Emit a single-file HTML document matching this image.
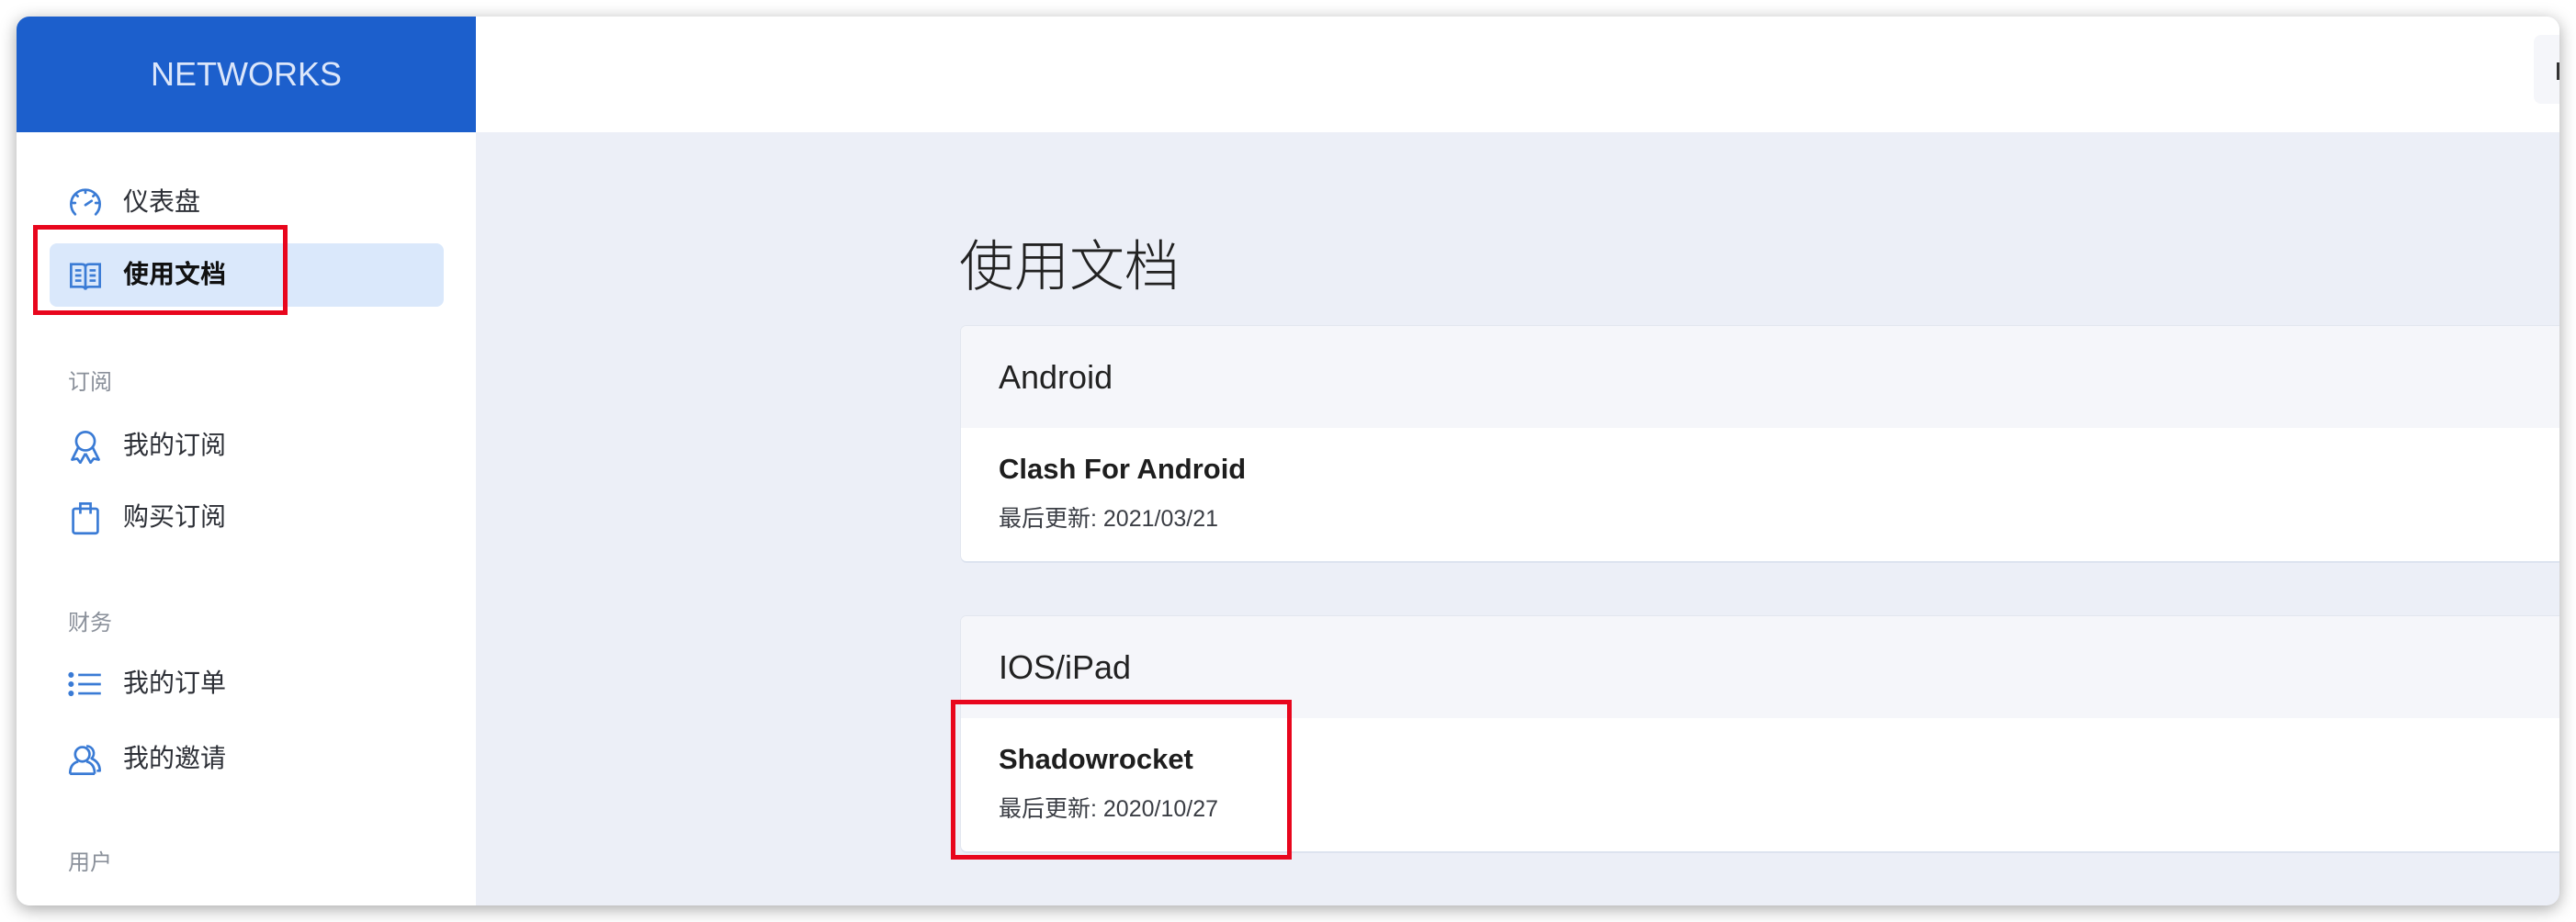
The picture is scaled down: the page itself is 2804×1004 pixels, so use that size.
<!DOCTYPE html>
<html><head><meta charset="utf-8"><style>
*{margin:0;padding:0;box-sizing:border-box}
body{width:2804px;height:1004px;background:#fff;position:relative;overflow:hidden;font-family:"Liberation Sans","Noto Sans CJK SC",sans-serif}
.win{position:absolute;left:18px;top:18px;width:2768px;height:968px;border-radius:14px;overflow:hidden;background:#eceff7;box-shadow:0 4px 18px rgba(0,0,0,.35)}
.logo{position:absolute;left:0;top:0;width:500px;height:126px;background:#1c5fcc;color:#dbe6fa;font-size:36px;text-align:center;line-height:126px}
.hdr{position:absolute;left:500px;top:0;right:0;height:126px;background:#fff}
.tr{position:absolute;right:0;top:20px;width:28px;height:75px;background:#f5f6fa;border-radius:8px 0 0 8px}
.tr:after{content:"";position:absolute;right:0;top:30px;width:3px;height:19px;background:#333}
.side{position:absolute;left:0;top:126px;width:500px;bottom:0;background:#fff}
.it{position:absolute;left:0;width:500px;height:40px;font-size:28px;color:#2c2f36;line-height:40px}
.it span{position:absolute;left:116px}
.it svg{position:absolute;left:56px;top:2px}
.lab{position:absolute;left:56px;font-size:24px;color:#8a909a}
.act{position:absolute;left:36px;top:121px;width:429px;height:69px;background:#dae8fb;border-radius:8px}
.main{position:absolute;left:500px;top:126px;right:0;bottom:0}
.title{position:absolute;left:526px;top:98px;font-size:60px;font-weight:300;color:#222;font-family:"Noto Sans CJK SC",sans-serif}
.card{position:absolute;left:528px;width:1800px;background:#fff;border-radius:6px;box-shadow:0 2px 0 #dde3ef,0 0 0 1px #e2e6ef}
.ch{height:111px;background:#f5f6fa;border-radius:6px 6px 0 0;font-size:36px;color:#222;padding-left:41px;line-height:111px}
.cb{height:145px;padding-left:41px;padding-top:27px}
.cb b{display:block;font-size:31px;color:#1e1e1e;height:44px}
.cb i{display:block;font-style:normal;font-size:25px;color:#3a3d44;margin-top:8px}
.red{position:absolute;border:5px solid #e8061d}
</style></head><body>
<div class="win">
<div class="logo">NETWORKS</div>
<div class="hdr"><div class="tr"></div></div>
<div class="side">
<div class="act"></div>
<div class="it" style="top:56px"><svg width="38" height="38" viewBox="0 0 34 34" fill="none" stroke="#3a7bd5" stroke-width="2.4" stroke-linecap="round"><path d="M7 28A14 14 0 1 1 27 28"/><path d="M17 19L23 15"/><path d="M17 5v2M5 17h2M27 17h2M8 9l1.5 1.5M26 9l-1.5 1.5"/></svg><span>仪表盘</span></div>
<div class="it" style="top:135px;font-weight:bold;color:#111"><svg width="38" height="38" viewBox="0 0 34 34" fill="none" stroke="#3a7bd5" stroke-width="2.4"><path d="M3 6h10q4 0 4 3v22q0-3-4-3H3zM31 6H21q-4 0-4 3v22q0-3 4-3h10z"/><path d="M7 12h6M7 17h6M7 22h6M21 12h6M21 17h6M21 22h6"/></svg><span>使用文档</span></div>
<div class="lab" style="top:252px">订阅</div>
<div class="it" style="top:321px"><svg width="38" height="38" viewBox="0 0 34 34" fill="none" stroke="#3a7bd5" stroke-width="2.4" stroke-linejoin="round"><circle cx="17" cy="12" r="9"/><path d="M10 18L4 30l5-1 3 4 5-9M24 18l6 12-5-1-3 4-5-9"/></svg><span>我的订阅</span></div>
<div class="it" style="top:399px"><svg width="38" height="38" viewBox="0 0 34 34" fill="none" stroke="#3a7bd5" stroke-width="2.4"><rect x="5" y="8" width="24" height="24" rx="2"/><path d="M12 13V3h10v10"/></svg><span>购买订阅</span></div>
<div class="lab" style="top:514px">财务</div>
<div class="it" style="top:580px"><svg width="38" height="38" viewBox="0 0 34 34" fill="#3a7bd5" stroke="#3a7bd5" stroke-width="2.4"><circle cx="3" cy="8" r="1.5"/><circle cx="3" cy="17" r="1.5"/><circle cx="3" cy="26" r="1.5"/><path d="M10 8h22M10 17h22M10 26h22"/></svg><span>我的订单</span></div>
<div class="it" style="top:662px"><svg width="38" height="38" viewBox="0 0 34 34" fill="none" stroke="#3a7bd5" stroke-width="2.4" stroke-linejoin="round"><circle cx="14" cy="12" r="7"/><path d="M2 31c0-8 4-11 8-12M26 31c0-8-4-11-8-12M2 31h24M18 4a7 7 0 0 1 5 12c4 2 8 5 8 12h-3"/></svg><span>我的邀请</span></div>
<div class="lab" style="top:775px">用户</div>
</div>
<div class="main">
<div class="title">使用文档</div>
<div class="card" style="top:211px"><div class="ch">Android</div><div class="cb"><b>Clash For Android</b><i>最后更新: 2021/03/21</i></div></div>
<div class="card" style="top:527px"><div class="ch">IOS/iPad</div><div class="cb"><b>Shadowrocket</b><i>最后更新: 2020/10/27</i></div></div>
</div>
</div>
<div class="red" style="left:36px;top:245px;width:277px;height:98px"></div>
<div class="red" style="left:1035px;top:762px;width:371px;height:174px"></div>
</body></html>
